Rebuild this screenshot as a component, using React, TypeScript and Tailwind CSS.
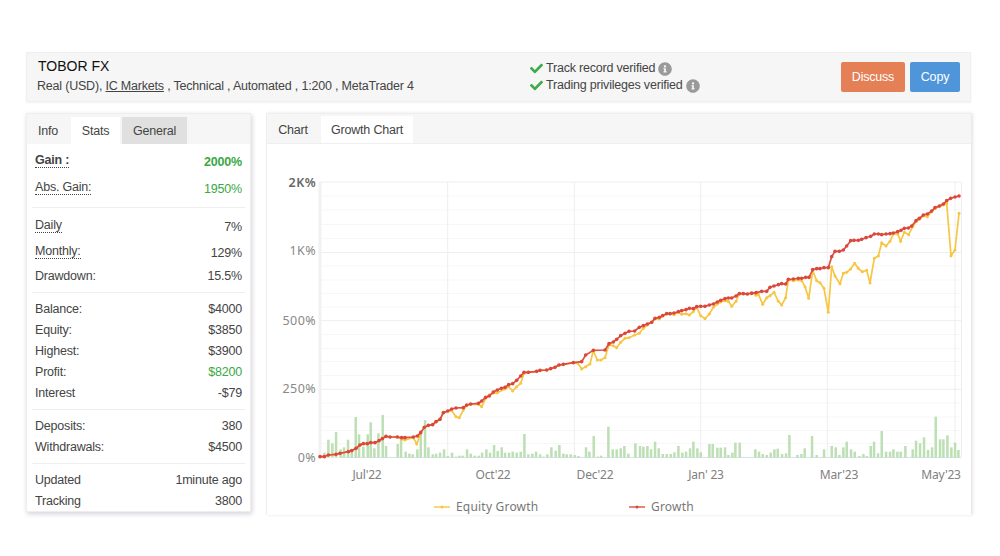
import { FaCheck, FaInfoCircle } from "react-icons/fa";

type P = [number, number];

// points are read in zoom coords, a = left half of the chart, b = right half
const a = (pts: P[]): P[] => pts.map(([x, y]) => [280 + x / 3, 170 + y / 3]);
const b = (pts: P[]): P[] => pts.map(([x, y]) => [630 + x / 3, 170 + y / 3]);

const growth: P[] = [
  ...a([[120,860],[133,860],[145,855],[168,853],[180,850],[205,845],[215,842],[228,835],[240,825],[250,821],[262,821],[272,818],[285,818],[297,812],[307,806],[318,799],[330,801],[352,801],[365,803],[375,803],[400,801],[412,798],[422,788],[433,772],[445,766],[458,764],[468,755],[480,748],[490,728],[503,723],[515,717],[528,714],[550,713],[560,705],[572,702],[595,700],[605,693],[617,682],[628,678],[640,666],[652,660],[664,655],[675,652],[686,644],[698,641],[710,631],[722,618],[732,607],[745,607],[770,604],[780,601],[800,600],[812,596],[825,592],[837,585],[850,583],[880,578],[905,575],[917,555],[940,541],[975,540],[987,521],[1000,516],[1010,508],[1022,497],[1035,490],[1047,484]]),
  ...b([[14,483],[28,472],[40,467],[52,462],[65,457],[75,445],[88,442],[98,437],[110,431],[120,431],[132,429],[145,425],[155,422],[168,419],[178,415],[190,416],[200,410],[212,409],[225,409],[238,405],[250,402],[262,396],[272,391],[285,386],[295,384],[305,384],[318,378],[328,371],[340,371],[352,372],[365,370],[378,368],[395,364],[410,364],[420,352],[432,348],[445,344],[455,341],[467,342],[475,328],[490,327],[505,325],[515,325],[527,322],[537,322],[548,299],[560,296],[570,296],[582,293],[595,293],[605,260],[615,244],[628,244],[640,240],[650,228],[662,212],[672,211],[685,211],[695,208],[708,203],[722,199],[733,192],[745,192],[755,194],[768,192],[780,191],[790,189],[803,185],[813,181],[823,175],[835,174],[845,168],[858,152],[868,145],[880,135],[892,132],[905,123],[915,113],[928,108],[940,102],[950,92],[962,85],[975,81],[987,78]]),
];

const equity: P[] = [
  ...a([[120,860],[133,860],[145,855],[168,853],[180,850],[205,845],[215,842],[228,835],[240,825],[250,821],[262,821],[272,818],[285,818],[297,812],[307,806],[318,799],[330,801],[352,801],[365,808],[375,810],[400,803],[410,822],[422,790],[433,772],[445,766],[458,764],[468,755],[480,748],[490,728],[515,722],[528,740],[538,743],[550,720],[560,707],[572,703],[595,703],[605,710],[617,685],[628,674],[652,668],[675,657],[686,650],[698,663],[710,650],[722,640],[732,610],[745,607],[770,604],[780,601],[800,600],[812,596],[825,592],[837,585],[850,583],[880,578],[893,580],[905,597],[917,590],[930,582],[940,542],[952,570],[963,570],[975,563],[987,525],[1000,527],[1010,533],[1022,517],[1035,505],[1047,503]]),
  ...b([[14,495],[28,490],[40,475],[52,465],[65,457],[75,447],[88,447],[98,437],[110,431],[120,432],[132,434],[145,427],[155,433],[168,431],[178,435],[190,425],[200,412],[212,437],[225,446],[238,432],[250,412],[262,402],[272,396],[285,392],[295,394],[305,409],[318,394],[328,371],[340,371],[352,372],[365,367],[378,376],[385,372],[398,403],[410,383],[420,377],[432,367],[445,394],[455,405],[467,383],[475,330],[490,332],[505,330],[515,332],[525,350],[536,385],[548,302],[560,332],[570,338],[582,355],[595,427],[605,290],[615,318],[630,341],[640,310],[650,307],[662,297],[674,280],[685,295],[697,305],[710,301],[720,339],[733,265],[745,258],[755,218],[768,228],[780,214],[790,192],[803,192],[812,214],[823,187],[836,194],[848,170],[858,155],[868,148],[880,138],[892,140],[905,125],[915,115],[928,110],[940,105],[950,100],[963,257],[975,240],[987,130]]),
];

const bars: P[] = [
  ...a([[133,848],[145,809],[157,820],[168,786],[182,838],[192,832],[204,809],[215,838],[227,741],[237,793],[250,830],[263,793],[272,757],[283,835],[295,790],[308,735],[318,828],[353,822],[363,805],[377,845],[388,851],[398,853],[412,838],[422,780],[435,750],[445,832],[458,853],[468,851],[480,848],[492,838],[503,858],[516,848],[528,860],[538,857],[548,857],[561,838],[572,851],[584,857],[596,857],[606,848],[619,838],[630,848],[642,825],[653,843],[665,832],[675,848],[687,848],[698,845],[710,848],[722,845],[733,792],[745,853],[757,851],[768,845],[780,853],[790,860],[802,853],[814,832],[827,842],[838,825],[850,851],[860,853],[872,853],[884,855],[895,858],[918,832],[928,845],[941,798],[953,860],[963,857],[985,770],[998,838],[1010,838],[1022,835],[1033,828],[1045,851]]),
  ...b([[16,820],[30,828],[40,830],[52,828],[63,838],[75,815],[86,835],[98,852],[110,852],[122,852],[133,847],[145,828],[157,848],[168,845],[180,835],[190,815],[202,835],[212,847],[238,822],[248,822],[262,833],[272,833],[285,832],[295,855],[307,848],[316,818],[329,818],[376,838],[387,845],[398,852],[410,855],[422,848],[433,838],[443,836],[456,852],[468,850],[478,795],[502,855],[514,852],[524,835],[546,798],[560,855],[582,838],[605,828],[617,832],[628,855],[640,832],[650,815],[663,838],[674,845],[688,858],[700,852],[710,858],[722,828],[732,815],[744,850],[755,783],[768,845],[780,845],[790,838],[802,845],[812,845],[826,828],[848,838],[858,812],[870,820],[882,802],[894,840],[906,832],[917,740],[930,808],[940,808],[952,796],[964,832],[975,818],[985,840]]),
];

const majorY = [182, 252.5, 320.7, 389.3, 457.3];
const minorY = [196, 210, 224.5, 238.5, 266, 280, 293.5, 307, 334.5, 348.5, 361.5, 375.5, 403, 417, 430.5, 443.5];
const gridX = [447.7, 574.3, 700.7, 827.3, 955, 961.5];
const yLabels: [string, number][] = [["2K%", 187], ["1K%", 255], ["500%", 325], ["250%", 393], ["0%", 462]];
const xLabels: [string, number][] = [["Jul'22", 367], ["Oct'22", 493], ["Dec'22", 595], ["Jan' 23", 706], ["Mar'23", 839], ["May'23", 941]];

const line = (pts: P[]) => pts.map(([x, y]) => `${x.toFixed(1)},${y.toFixed(1)}`).join(" ");

function GrowthChart() {
  return (
    <svg
      viewBox="267 144 704 371"
      width={704}
      height={371}
      className="block"
      style={{ fontFamily: '"Noto Sans", sans-serif' }}
    >
      {minorY.map((y) => (
        <line key={y} x1={320} x2={961} y1={y} y2={y} stroke="#f7f7f7" />
      ))}
      {majorY.map((y) => (
        <line key={y} x1={320} x2={961} y1={y} y2={y} stroke="#eeeeee" />
      ))}
      {gridX.map((x) => (
        <line key={x} x1={x} x2={x} y1={182} y2={457} stroke="#eeeeee" />
      ))}
      <line x1={320} x2={320} y1={182} y2={457} stroke="#f1f1f1" strokeWidth={3} />
      <line x1={340} x2={961} y1={457.5} y2={457.5} stroke="#d5e3ea" />
      {bars.map(([x, y]) => (
        <rect key={x} x={x - 1.2} y={y} width={2.5} height={457.5 - y} fill="#bcdfb4" />
      ))}
      <polyline points={line(equity)} fill="none" stroke="#f6c644" strokeWidth={1.7} />
      {equity.map(([x, y]) => (
        <circle key={x} cx={x} cy={y} r={1.5} fill="#f6c644" />
      ))}
      <polyline points={line(growth)} fill="none" stroke="#dc4f41" strokeWidth={1.7} />
      {growth.map(([x, y]) => (
        <circle key={x} cx={x} cy={y} r={1.8} fill="#d9483b" />
      ))}
      {yLabels.map(([t, y], i) => (
        <text key={t} x={316} y={y} textAnchor="end" fontSize={12.5} fontWeight={i === 0 ? 600 : 400} fill={i === 0 ? "#666" : "#888"} letterSpacing={0.4}>
          {t}
        </text>
      ))}
      {xLabels.map(([t, x]) => (
        <text key={t} x={x} y={479} textAnchor="middle" fontSize={12} fill="#808080">
          {t}
        </text>
      ))}
      <line x1={434} x2={450} y1={507} y2={507} stroke="#f6c644" strokeWidth={1.4} />
      <circle cx={442} cy={507} r={1.5} fill="#f6c644" />
      <text x={456} y={511} fontSize={12} fill="#777" letterSpacing={0.2}>Equity Growth</text>
      <line x1={629} x2={645} y1={507} y2={507} stroke="#dc4f41" strokeWidth={1.4} />
      <circle cx={637} cy={507} r={1.5} fill="#d9483b" />
      <text x={651} y={511} fontSize={12} fill="#777" letterSpacing={0.2}>Growth</text>
    </svg>
  );
}

function Verified({ text }: { text: string }) {
  return (
    <div className="flex h-[17px] items-center">
      <FaCheck className="mr-[3px] h-[13px] w-[13px] text-[#3cab4b]" />
      <span>{text}</span>
      <FaInfoCircle className="ml-[3px] h-[14px] w-[14px] text-[#9a9a9a]" />
    </div>
  );
}

interface RowProps {
  label: string;
  value: string;
  h?: string;
  dotted?: boolean;
  bold?: boolean;
  green?: boolean;
}

function Row({ label, value, h = "h-[21px]", dotted, bold, green }: RowProps) {
  return (
    <div className={`flex items-center justify-between px-[3px] ${h}`}>
      <span
        className={`${dotted ? "mb-[4px] border-b border-dotted border-[#444] leading-[14px]" : ""} ${bold ? "font-bold" : ""}`}
      >
        {label}
      </span>
      <span className={`${green ? "text-[#3aa845]" : ""} ${bold ? "font-bold" : ""}`}>{value}</span>
    </div>
  );
}

function Group({ children, pt = "pt-[6px]", pb = "pb-[5px]" }: { children: React.ReactNode; pt?: string; pb?: string }) {
  return <div className={`border-b border-[#eeeeee] ${pt} ${pb}`}>{children}</div>;
}

export default function App() {
  return (
    <div
      className="h-[556px] w-[1000px] overflow-hidden bg-white px-[26px] pt-[52px] text-[12.5px] tracking-[-0.2px] text-[#444]"
      style={{ fontFamily: '"Liberation Sans", Arial, sans-serif' }}
    >
      <div className="flex h-[50px] w-[945px] items-center border border-[#efefef] bg-[#f6f6f6] pr-[10px] pl-[10px] shadow-[0_1px_2px_rgba(0,0,0,0.05)]">
        <div className="mb-[3px] w-[493px]">
          <div className="ml-px text-[14px] leading-[18px] font-medium tracking-normal text-[#111]">TOBOR FX</div>
          <div className="mt-[2px] leading-[18px]">
            Real (USD), <span className="underline">IC Markets</span> , Technical , Automated , 1:200 , MetaTrader 4
          </div>
        </div>
        <div>
          <Verified text="Track record verified" />
          <Verified text="Trading privileges verified" />
        </div>
        <div className="ml-auto flex gap-[5px] text-white">
          <button className="h-[30px] w-[64px] rounded-[2px] bg-[#e47f56]">Discuss</button>
          <button className="h-[30px] w-[50px] rounded-[2px] bg-[#4f95d9]">Copy</button>
        </div>
      </div>

      <div className="mt-[11px] flex gap-[15px]">
        <div className="h-[399px] w-[225px] border border-[#eeeeee] bg-white shadow-[1px_2px_5px_rgba(0,0,50,0.18)]">
          <div className="flex h-[30px] items-end bg-[#f6f6f6]">
            <div className="flex h-[27px] w-[44px] items-center justify-center pt-px pr-[2px]">Info</div>
            <div className="flex h-[27px] w-[49px] items-center justify-center bg-white pt-px">Stats</div>
            <div className="ml-[2px] flex h-[27px] w-[65px] items-center justify-center bg-[#e0e0e0] pt-px">General</div>
          </div>
          <div className="px-[5px]">
            <Group pt="pt-[5px]" pb="pb-[4px]">
              <Row label="Gain :" value="2000%" h="h-[27px]" dotted bold green />
              <Row label="Abs. Gain:" value="1950%" h="h-[27px]" dotted green />
            </Group>
            <Group>
              <Row label="Daily" value="7%" h="h-[26px]" dotted />
              <Row label="Monthly:" value="129%" h="h-[26px]" dotted />
              <Row label="Drawdown:" value="15.5%" />
            </Group>
            <Group>
              <Row label="Balance:" value="$4000" />
              <Row label="Equity:" value="$3850" />
              <Row label="Highest:" value="$3900" />
              <Row label="Profit:" value="$8200" green />
              <Row label="Interest" value="-$79" />
            </Group>
            <Group>
              <Row label="Deposits:" value="380" />
              <Row label="Withdrawals:" value="$4500" />
            </Group>
            <div className="pt-[6px]">
              <Row label="Updated" value="1minute ago" />
              <Row label="Tracking" value="3800" />
            </div>
          </div>
        </div>

        <div className="h-[402px] w-[705px] border-t border-l border-[#eeeeee] bg-white shadow-[2px_0_3px_rgba(0,0,0,0.1)]">
          <div className="flex h-[30px] items-end border-b border-[#efefef] bg-[#f6f6f6]">
            <div className="flex h-[26px] w-[54px] items-center justify-center pr-[2px]">Chart</div>
            <div className="flex h-[27px] w-[92px] items-center justify-center bg-white pt-px">Growth Chart</div>
          </div>
          <GrowthChart />
        </div>
      </div>
    </div>
  );
}
